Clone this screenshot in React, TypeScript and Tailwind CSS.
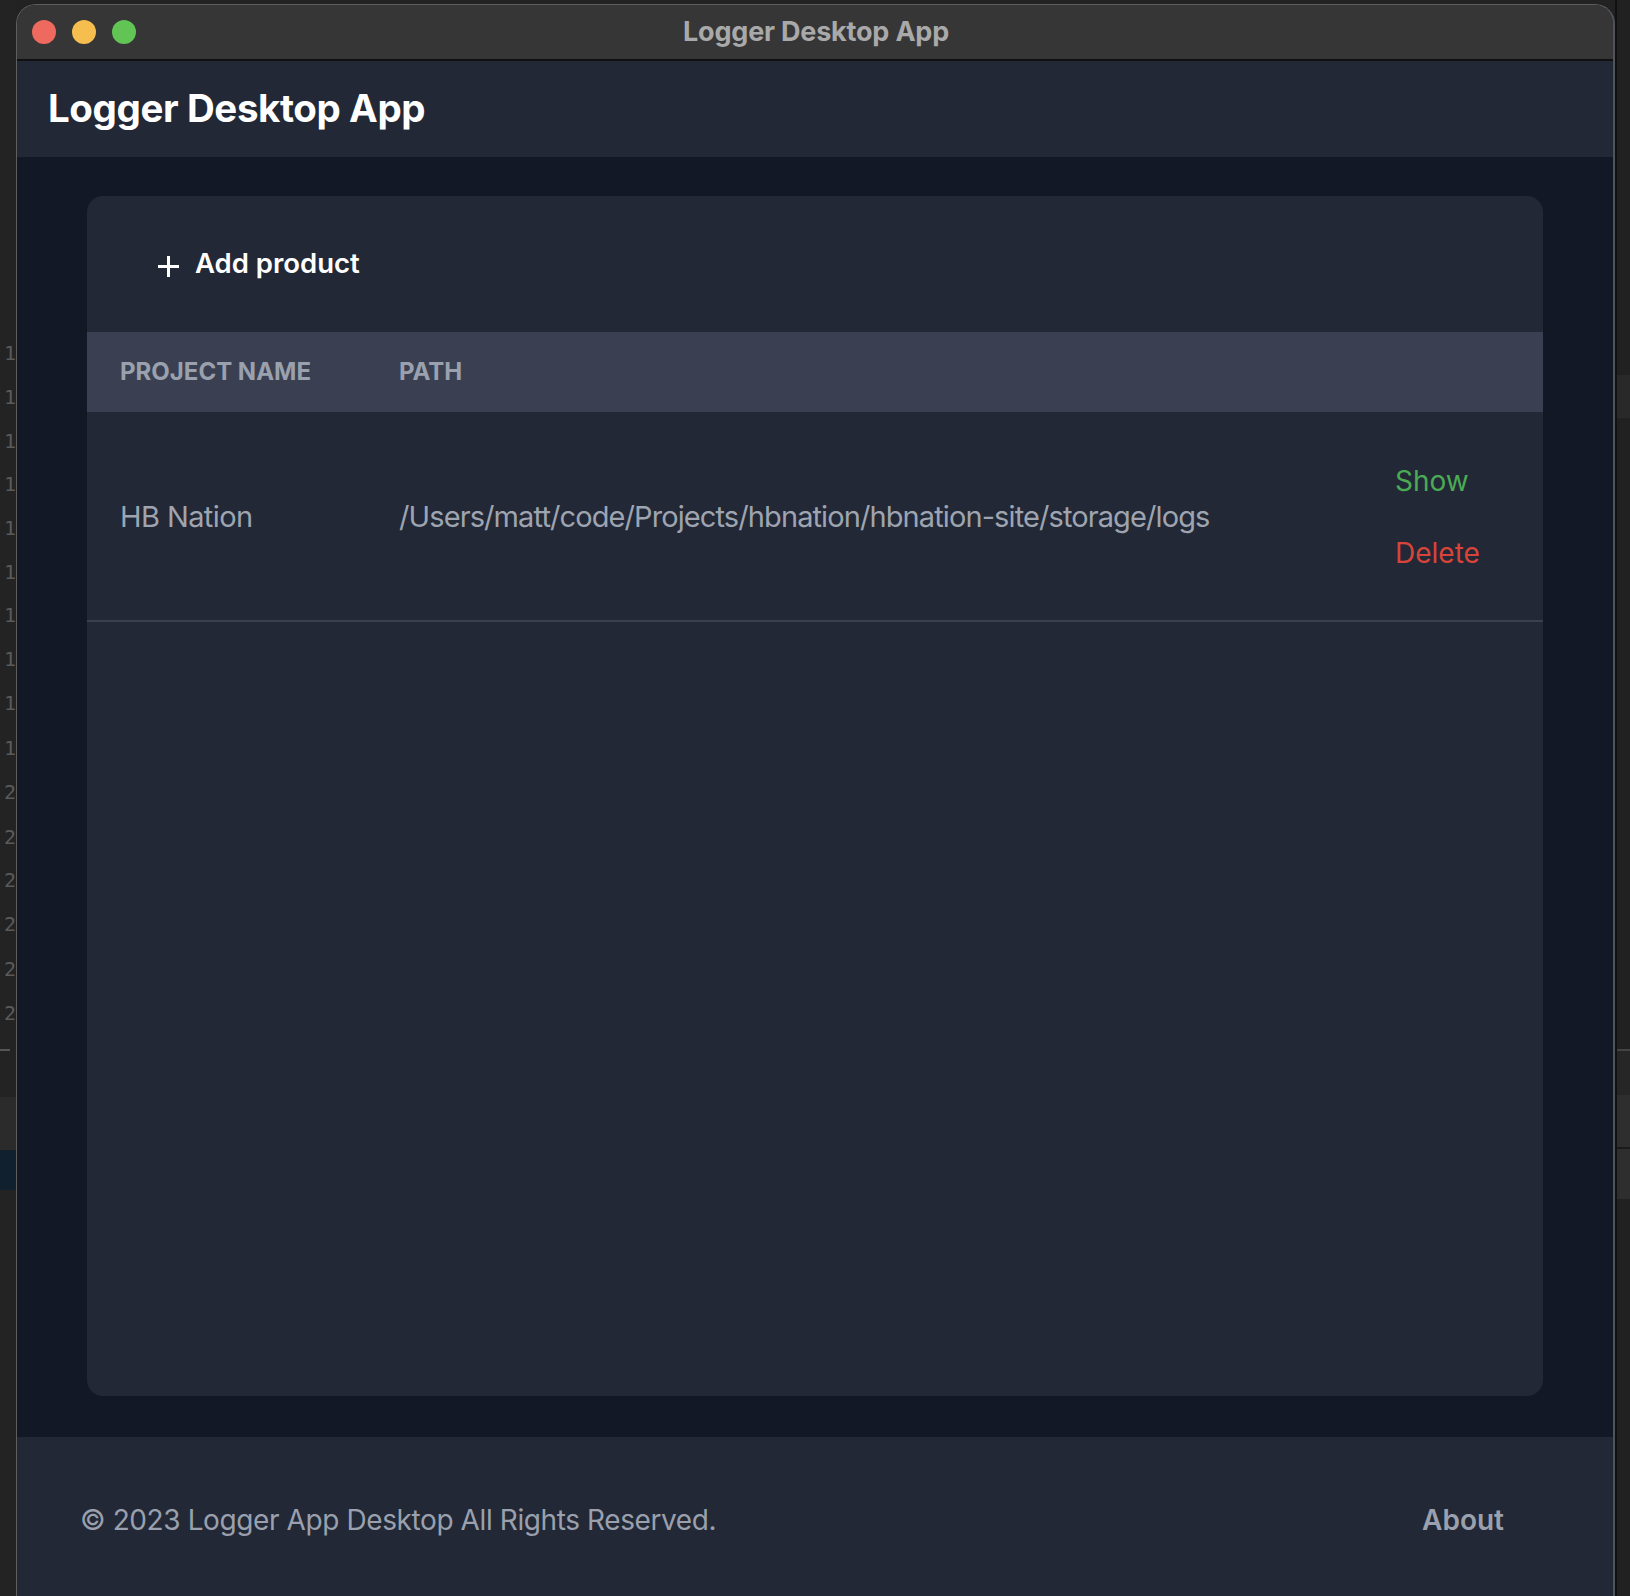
import React from "react";

const lineNums = [
  ["1", 353], ["1", 397], ["1", 441], ["1", 484], ["1", 528], ["1", 572], ["1", 615], ["1", 659],
  ["1", 703], ["1", 748], ["2", 792], ["2", 837], ["2", 880], ["2", 924], ["2", 969], ["2", 1013],
] as const;

function LeftStrip() {
  return (
    <div className="relative w-[16px] h-full bg-[#232323] overflow-hidden shrink-0">
      {lineNums.map(([n, y], i) => (
        <div
          key={i}
          className="absolute left-[4px] text-[20px] leading-none text-[#5a5a5a] font-['DejaVu_Sans_Mono',monospace]"
          style={{ top: y - 10 }}
        >
          {n}
        </div>
      ))}
      <div className="absolute left-0 top-[1049px] w-[10px] h-[2px] bg-[#555]" />
      <div className="absolute left-0 top-[1097px] w-full h-[53px] bg-[#2b2b2b]" />
      <div className="absolute left-0 top-[1150px] w-full h-[40px] bg-[#10202f]" />
    </div>
  );
}

function RightStrip() {
  return (
    <div className="relative w-[15px] h-full bg-[#212121] overflow-hidden shrink-0 border-l-2 border-[#111]">
      <div className="absolute left-0 top-[375px] w-full h-[43px] bg-[#292929]" />
      <div className="absolute left-0 top-[1049px] w-full h-[2px] bg-[#444]" />
      <div className="absolute left-0 top-[1051px] w-full h-[44px] bg-[#262626]" />
      <div className="absolute left-0 top-[1095px] w-full h-[52px] bg-[#2e2e2e]" />
      <div className="absolute left-0 top-[1147px] w-full h-[2px] bg-[#1a1a1a]" />
      <div className="absolute left-0 top-[1149px] w-full h-[50px] bg-[#2e2e2e]" />
    </div>
  );
}

export default function App() {
  return (
    <div className="w-[1630px] h-[1596px] bg-[#222222] overflow-hidden flex font-['Inter','Liberation_Sans',sans-serif]">
      <LeftStrip />
      <div className="flex flex-col w-[1599px] shrink-0 h-[1600px] mt-[4px] rounded-t-[20px] border border-[#5e5e5e] border-r-2 border-r-[#50535b] overflow-hidden bg-[#222836]">
        {/* title bar */}
        <div className="relative h-[56px] shrink-0 bg-[#363636] border-b-2 border-[#111] flex items-center justify-center">
          <div className="absolute left-[15px] top-[15px] flex gap-[16px]">
            <span className="w-[24px] h-[24px] rounded-full bg-[#ee6a5f]" />
            <span className="w-[24px] h-[24px] rounded-full bg-[#f5be4f]" />
            <span className="w-[24px] h-[24px] rounded-full bg-[#61c454]" />
          </div>
          <span className="text-[27px] font-bold text-[#a9a9a9] tracking-[-0.2px] ml-[2px]">
            Logger Desktop App
          </span>
        </div>
        {/* header */}
        <div className="h-[96px] shrink-0 bg-[#222836] flex items-center px-[31px]">
          <h1 className="text-[38.5px] font-bold text-white tracking-[-0.4px]">Logger Desktop App</h1>
        </div>
        {/* main */}
        <div className="bg-[#121826] px-[70px] pt-[39px] pb-[41px] shrink-0">
          <div className="h-[1200px] bg-[#222836] rounded-[16px] overflow-hidden flex flex-col">
            <div className="h-[136px] shrink-0 flex items-center pl-[70px]">
              <button className="flex items-center gap-[15px] text-white text-[27.5px] font-semibold">
                <svg width="23" height="23" viewBox="0 0 23 23" className="mt-[5px]">
                  <path d="M11.5 1v21M1 11.5h21" stroke="white" strokeWidth="3" />
                </svg>
                Add product
              </button>
            </div>
            <div className="h-[80px] shrink-0 bg-[#3a4051] flex items-center text-[24px] font-bold uppercase text-[#9aa1ae]">
              <div className="w-[312px] pl-[33px]">Project Name</div>
              <div>Path</div>
            </div>
            <div className="h-[210px] shrink-0 flex items-center border-b-2 border-[#3a4050] text-[29px] text-[#9ea4b0]">
              <div className="w-[312px] pl-[33px] tracking-[-0.6px] mt-[2px]">HB Nation</div>
              <div className="flex-1 tracking-[-0.9px] mt-[2px]">/Users/matt/code/Projects/hbnation/hbnation-site/storage/logs</div>
              <div className="w-[148px] flex flex-col gap-[38px] pt-[2px] text-[28px]">
                <a className="text-[#4bab55] leading-[34px]">Show</a>
                <a className="text-[#d8443a] leading-[34px]">Delete</a>
              </div>
            </div>
            <div className="flex-1" />
          </div>
        </div>
        {/* footer */}
        <div className="flex-1 bg-[#222836] flex items-start justify-between pl-[63px] pr-[109px] pt-[62px]">
          <p className="text-[28px] text-[#9aa0ad] tracking-[-0.4px]">© 2023 Logger App Desktop All Rights Reserved.</p>
          <a className="text-[28px] font-semibold text-[#9aa0ad]">About</a>
        </div>
      </div>
      <RightStrip />
    </div>
  );
}
